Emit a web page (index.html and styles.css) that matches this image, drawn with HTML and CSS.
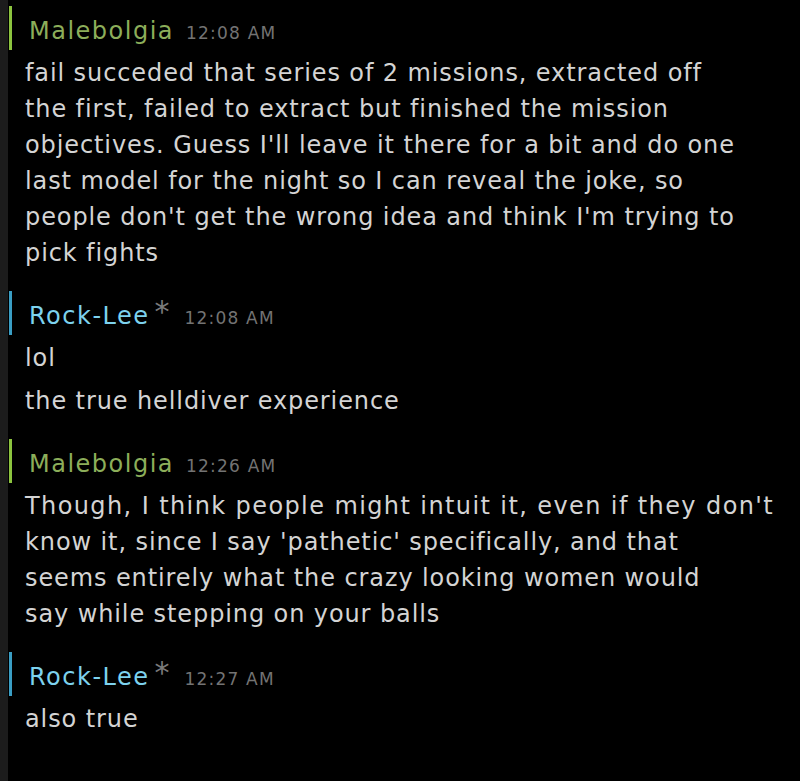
FILE: index.html
```html
<!DOCTYPE html>
<html>
<head>
<meta charset="utf-8">
<link rel="stylesheet" href="styles.css">
</head>
<body>
<div class="page">
  <div class="strip"></div>
  <div class="chat">
    <div class="group ingame first">
      <div class="header"><span class="name">Malebolgia</span><span class="time">12:08 AM</span></div>
      <div class="msg">fail succeded that series of 2 missions, extracted off<br>the first, failed to extract but finished the mission<br>objectives. Guess I'll leave it there for a bit and do one<br>last model for the night so I can reveal the joke, so<br>people don't get the wrong idea and think I'm trying to<br>pick fights</div>
    </div>
    <div class="group online">
      <div class="header"><span class="name">Rock-Lee</span><span class="star">*</span><span class="time">12:08 AM</span></div>
      <div class="msg">lol</div>
      <div class="msg">the true helldiver experience</div>
    </div>
    <div class="group ingame">
      <div class="header"><span class="name">Malebolgia</span><span class="time">12:26 AM</span></div>
      <div class="msg"><span class="wide">Though, I think people might intuit it, even if they don't</span><br>know it, since I say 'pathetic' specifically, and that<br>seems entirely what the crazy looking women would<br>say while stepping on your balls</div>
    </div>
    <div class="group online">
      <div class="header"><span class="name">Rock-Lee</span><span class="star">*</span><span class="time">12:27 AM</span></div>
      <div class="msg">also true</div>
    </div>
  </div>
</div>
</body>
</html>
```
FILE: styles.css
```css
html, body {
  margin: 0;
  padding: 0;
  background: #000;
}
.page {
  display: flex;
  min-height: 781px;
  font-family: "DejaVu Sans", "Noto Sans", sans-serif;
}
.strip {
  width: 8px;
  flex: none;
  background: #1c1c1c;
}
.chat {
  flex: 1;
  padding-top: 6px;
}
.group {
  margin-top: 20px;
}
.group.first {
  margin-top: 0;
}
.header {
  display: flex;
  align-items: center;
  height: 44px;
  margin-left: 1px;
  padding-left: 17px;
  border-left: 3px solid #8cc43f;
  margin-bottom: 5px;
}
.online .header {
  border-left-color: #3a9ec4;
}
.name {
  font-size: 24px;
  letter-spacing: 1.5px;
  color: #8cae5a;
  margin-top: 6px;
}
.online .name {
  color: #7dd2ee;
}
.star {
  font-size: 30px;
  line-height: 1;
  color: #7a7a7a;
  align-self: flex-start;
  margin-top: 6px;
  margin-left: 5px;
}
.time {
  font-size: 17px;
  letter-spacing: 1.2px;
  color: #737373;
  margin-left: 12px;
  margin-top: 10px;
}
.star + .time {
  margin-left: 15px;
}
.msg {
  padding-left: 17px;
  padding-right: 4px;
  font-size: 24px;
  letter-spacing: 0.9px;
  line-height: 36px;
  white-space: nowrap;
  color: #d4d4d4;
}
.msg .wide {
  letter-spacing: 1.4px;
}
.msg + .msg {
  margin-top: 7px;
}
```
